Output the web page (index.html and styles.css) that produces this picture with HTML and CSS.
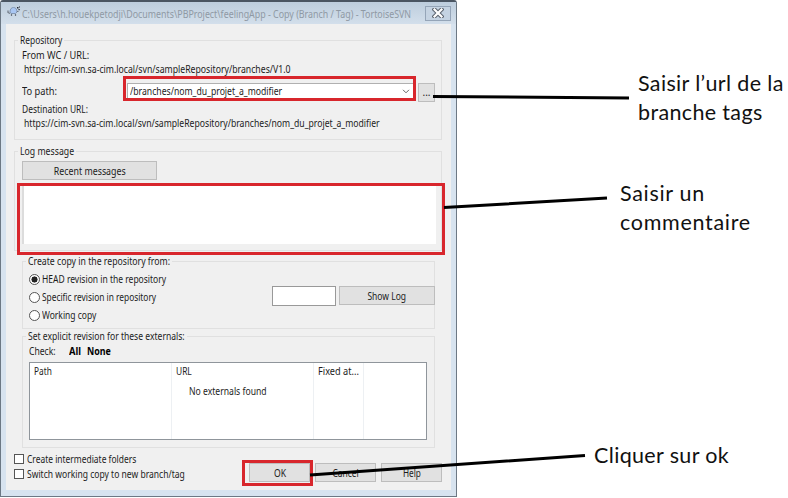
FILE: index.html
```
<!DOCTYPE html>
<html lang="en">
<head>
<meta charset="utf-8">
<title>Copy (Branch / Tag) - TortoiseSVN</title>
<link rel="stylesheet" href="styles.css">
</head>
<body>
<main class="page">
  <section class="window">
    <header class="titlebar">
      <svg class="app-icon" viewBox="0 0 14 12"><path d="M3 6C3 3 4.500 1.500 6.500 1.500S10 3 10 6L8.500 7.500H4Z" fill="#a9c6f2" stroke="#8397b3"/><path d="M1 4.500v2l2 1M4.500 8v2M8.500 8v2M10 5.500h1.500" fill="none" stroke="#6d7683" stroke-width="1.200"/><path d="M10 1h1.500v1.500H10zM12 .500h1v1h-1zM11.500 3h1.200v1.200h-1.200z" fill="#252a35"/></svg>
      <span class="title">C:\Users\h.houekpetodji\Documents\PBProject\feelingApp - Copy (Branch / Tag) - TortoiseSVN</span>
      <span class="close"><svg viewBox="0 0 12 10"><path d="M2.500 1.500 9.500 8.500M9.500 1.500 2.500 8.500" stroke="#5b636e" stroke-width="4.200" stroke-linecap="square"/><path d="M2.500 1.500 9.500 8.500M9.500 1.500 2.500 8.500" stroke="#fff" stroke-width="2.200" stroke-linecap="square"/></svg></span>
    </header>
    <div class="client">
      <fieldset class="group repository">
        <legend><span class="t-repo">Repository</span></legend>
        <p class="label from"><span class="t-from">From WC / URL:</span></p>
        <p class="url"><span class="t-url1">https://cim-svn.sa-cim.local/svn/sampleRepository/branches/V1.0</span></p>
        <div class="path-row">
          <div class="path-label"><span class="t-topath">To path:</span></div>
          <div class="combo"><span class="t-combo">/branches/nom_du_projet_a_modifier</span><svg class="chevron" viewBox="0 0 8 5"><path d="M1 .800 4 3.800 7 .800" fill="none" stroke="#666"/></svg></div>
          <span class="button browse">...</span>
        </div>
        <p class="label dest"><span class="t-dest">Destination URL:</span></p>
        <p class="url"><span class="t-url2">https://cim-svn.sa-cim.local/svn/sampleRepository/branches/nom_du_projet_a_modifier</span></p>
      </fieldset>
      <fieldset class="group log">
        <legend><span class="t-log">Log message</span></legend>
        <span class="button recent"><span class="t-recent">Recent messages</span></span>
        <div class="message"></div>
      </fieldset>
      <fieldset class="group inner create">
        <legend><span class="t-create">Create copy in the repository from:</span></legend>
        <div class="create-row">
          <div class="radios">
            <div class="option"><i class="radio checked"></i><span class="t-head">HEAD revision in the repository</span></div>
            <div class="option"><i class="radio"></i><span class="t-spec">Specific revision in repository</span></div>
            <div class="option"><i class="radio"></i><span class="t-work">Working copy</span></div>
          </div>
          <span class="revision"></span>
          <span class="button showlog"><span class="t-show">Show Log</span></span>
        </div>
      </fieldset>
      <fieldset class="group inner externals">
        <legend><span class="t-set">Set explicit revision for these externals:</span></legend>
        <div class="check-row"><span class="t-check">Check:</span><b class="t-all">All</b><b class="t-none">None</b></div>
        <div class="table">
          <div class="col"><span class="t-path">Path</span></div>
          <div class="col"><span class="t-urlh">URL</span><br><span class="t-empty">No externals found</span></div>
          <div class="col"><span class="t-fixed">Fixed at...</span></div>
          <div class="col"></div>
        </div>
      </fieldset>
      <footer class="footer">
        <div class="checks">
          <div class="option"><i class="box"></i><span class="t-inter">Create intermediate folders</span></div>
          <div class="option"><i class="box"></i><span class="t-switch">Switch working copy to new branch/tag</span></div>
        </div>
        <span class="button"><span class="t-ok">OK</span></span>
        <span class="button"><span class="t-cancel">Cancel</span></span>
        <span class="button"><span class="t-help">Help</span></span>
      </footer>
    </div>
  </section>
  <div class="frame frame-path"></div>
  <div class="frame frame-log"></div>
  <div class="frame frame-ok"></div>
  <svg class="lines" viewBox="0 0 788 498"><path d="M433 96.500 629 98M444 207.500 607 198M310 475 585 455.500" stroke="#000" stroke-width="3" fill="none"/></svg>
  <p class="note note-path">Saisir l’url de la<br>branche tags</p>
  <p class="note note-log">Saisir un<br>commentaire</p>
  <p class="note note-ok">Cliquer sur ok</p>
</main>
</body>
</html>
```
FILE: styles.css
```
* { box-sizing: border-box; }
body { margin: 0; background: #fff; }
p { margin: 0; }
.page { position: relative; width: 788px; height: 498px; overflow: hidden; }
.window {
  display: flex;
  flex-direction: column;
  width: 457px;
  height: 497px;
  padding: 0 5px 6px 5px;
  border: 1px solid #6c7884;
  border-top: 2px solid #4a5562;
  border-radius: 3px 3px 0 0;
  background: #d7e3ef;
  color: #1c1c1c;
  font: 10px/14px "Noto Sans", "Open Sans", sans-serif;
  white-space: nowrap;
}
.titlebar {
  display: flex;
  flex: none;
  align-items: center;
  height: 22px;
  margin: 0 -5px;
  padding: 0 6px;
  background: linear-gradient(#bdcddd, #d3dfeb);
  color: #8f99a4;
}
.app-icon { flex: none; width: 14px; height: 12px; margin-bottom: 2px; }
.title { width: 403px; padding-top: 1px; }
.close {
  display: flex;
  flex: none;
  align-items: center;
  justify-content: center;
  width: 26px;
  height: 15px;
  margin-left: auto;
  border: 1px solid #95a5b8;
  background: #c5d3e2;
}
.close svg { width: 12px; height: 10px; }
.client { flex: 1; padding: 9px 9px 0 8px; background: #f0f0f0; }
.group { min-width: 0; margin: 0; padding: 0; border: 1px solid #e0e0e0; }
.group legend { display: block; margin-left: 3px; padding: 0 2px; height: 14px; }

/* Condensed interface text: each label is narrowed by its own factor */
[class^="t-"], .title { display: inline-block; transform: scaleX(calc(var(--w, .82) * 1.05)); transform-origin: 0 50%; }
.button > [class^="t-"] { transform-origin: 50% 50%; }
.title { --w: .843; margin-left: 1px; }
.t-repo { --w: .80; margin-right: -8px; }
.t-from { --w: .878; }
.t-url1 { --w: .828; }
.t-topath { --w: .884; }
.t-combo { --w: .824; }
.t-dest { --w: .804; }
.t-url2 { --w: .823; }
.t-log { --w: .83; margin-right: -8px; }
.t-recent { --w: .842; }
.t-create { --w: .828; margin-right: -21px; }
.t-head { --w: .81; }
.t-spec { --w: .795; }
.t-work { --w: .808; }
.t-show { --w: .81; }
.t-set { --w: .816; margin-right: -26px; }
.t-all { --w: .89; margin-left: 9px; }
.t-none { --w: .845; margin-left: 5.5px; }
.t-path { --w: .79; }
.t-urlh { --w: .80; }
.t-fixed { --w: .876; }
.t-inter { --w: .804; }
.t-switch { --w: .813; }
.t-cancel { --w: .805; }
.t-help { --w: .785; }
.t-empty { margin: 6px 0 0 13px; }

.repository { height: 107px; }
.label { height: 14px; padding-left: 7px; }
.url { height: 14px; padding-left: 9px; }
.from { margin-top: 1px; }
.path-row { display: flex; align-items: center; height: 20px; margin-top: 6px; padding-left: 7px; }
.path-label { width: 105px; height: 16px; }
.combo {
  display: flex;
  align-items: center;
  justify-content: space-between;
  width: 287px;
  height: 18px;
  padding: 0 3px 2px 2px;
  border: 1px solid #b0b0b0;
  background: #fff;
}
.chevron { flex: none; width: 8px; height: 5px; }
.button {
  display: flex;
  align-items: center;
  justify-content: center;
  height: 19px;
  border: 1px solid #bdbdbd;
  background: #e1e1e1;
}
.browse { width: 17px; margin-left: 4px; }
.log { height: 107px; margin-top: 4px; }
.recent { width: 135px; margin: 3px 0 0 7px; }
.message { width: 414px; height: 58px; margin: 6px 0 0 7px; border-left: 2px solid #dcdcdc; background: #fff; }
.inner { margin: 3px 7px 0 8px; }
.create { height: 75px; }
.create-row { display: flex; height: 60px; }
.radios { width: 250px; padding: 2px 0 0 6px; }
.option { display: flex; align-items: center; }
.radios .option { height: 18px; }
.radio { flex: none; width: 11px; height: 11px; margin-right: 2px; border: 1px solid #555; border-radius: 50%; background: #fff; }
.checked { background: radial-gradient(circle, #222 0 2.8px, #fff 3.3px); }
.revision { width: 64px; height: 20px; margin-top: 18px; border: 1px solid #999; background: #fff; }
.showlog { width: 96px; margin: 18px -1px 0 3px; }
.externals { height: 119px; margin-top: 0; }
.check-row { display: flex; height: 14px; padding-left: 6px; margin-top: 1px; }
.check-row b { color: #000; }
.table {
  display: grid;
  grid-template-columns: 142px 142px 50px 1fr;
  width: 398px;
  height: 78px;
  margin: 4px 0 0 6px;
  border: 1px solid #8f959b;
  background: #fff;
}
.col { padding: 1px 0 0 4px; border-right: 1px solid #edf0f3; }
.col:last-child { border-right: 0; }
.footer { display: flex; margin-top: 3px; }
.checks { width: 235px; }
.checks .option { height: 15.5px; }
.box { flex: none; width: 10px; height: 10px; margin-right: 3px; border: 1px solid #555; background: #fff; }
.footer .button { width: 61px; margin: 12px 5px 0 0; }
.footer .button:last-child { margin-right: 0; }
.frame { position: absolute; border: 3px solid #d8262c; }
.frame-path { left: 123px; top: 76px; width: 293px; height: 25px; }
.frame-log { left: 17px; top: 183px; width: 428px; height: 72px; }
.frame-ok { left: 242px; top: 460px; width: 71px; height: 26px; }
.lines { position: absolute; left: 0; top: 0; width: 788px; height: 498px; }
.note { position: absolute; color: #111; font: 21.5px/29px Lato, sans-serif; letter-spacing: .35px; white-space: nowrap; }
.note-path { left: 638px; top: 69px; }
.note-log { left: 620px; top: 179px; letter-spacing: .7px; }
.note-ok { left: 594px; top: 441px; }
```
